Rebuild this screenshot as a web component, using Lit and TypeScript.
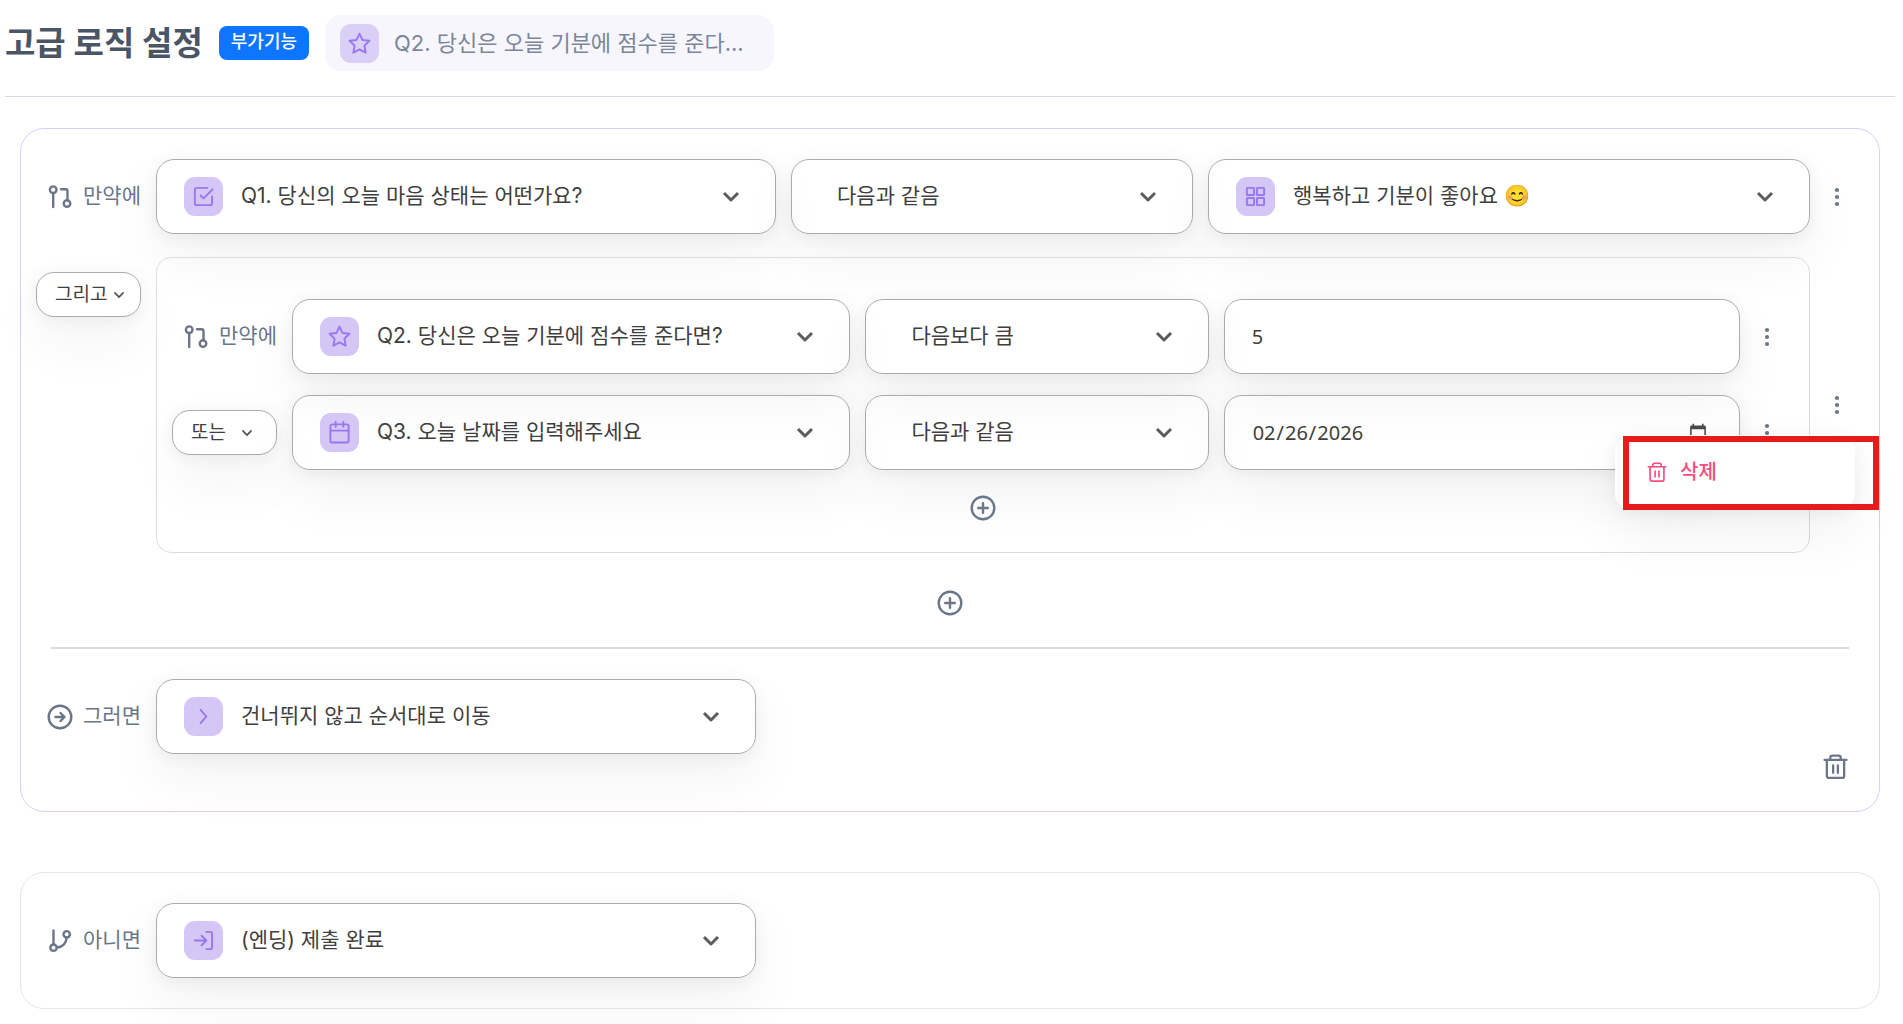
import { LitElement, html, css, svg, nothing } from "lit";
import { customElement, property } from "lit/decorators.js";

const ICONS: Record<string, unknown> = {
  star: svg`<polygon points="12 1.8 15.100 8.300 22.400 9.200 17.100 14.200 18.400 21.600 12 18.100 5.600 21.600 6.900 14.200 1.600 9.200 8.900 8.300"/>`,
  check: svg`<path d="M9 11l3 3 9.500-9.500M21 12v7a2 2 0 0 1-2 2H5a2 2 0 0 1-2-2V5a2 2 0 0 1 2-2h11"/>`,
  grid: svg`<rect x="3" y="3" width="7.500" height="7.500" rx=".6"/><rect x="13.500" y="3" width="7.500" height="7.500" rx=".6"/><rect x="3" y="13.500" width="7.500" height="7.500" rx=".6"/><rect x="13.500" y="13.500" width="7.500" height="7.500" rx=".6"/>`,
  calendar: svg`<rect x="2.500" y="3.500" width="19" height="19" rx="2"/><path d="M8 1v5M16 1v5M3 10h18"/>`,
  next: svg`<path d="M9 5l6 7-6 7"/>`,
  login: svg`<path d="M15 3h4a2 2 0 0 1 2 2v14a2 2 0 0 1-2 2h-4M10 17l5-5-5-5M15 12H3"/>`,
  request: svg`<circle cx="5.200" cy="4.700" r="3.300"/><path d="M5.200 8.200V22M13 4.200h4.500a2 2 0 0 1 2 2v9"/><circle cx="19" cy="18.600" r="3.300"/>`,
  branch: svg`<path d="M5.500 1.500V15M18.500 9a10 9.500 0 0 1-9.500 9.500"/><circle cx="18.700" cy="5.300" r="3.200"/><circle cx="5.500" cy="18.700" r="3.200"/>`,
  then: svg`<circle cx="12" cy="12" r="11.300"/><path d="M7.500 12h8.500M12.500 8l4 4-4 4"/>`,
  plus: svg`<circle cx="12" cy="12" r="11.300"/><path d="M12 7.200v9.600M7.200 12h9.600"/>`,
  trash: svg`<path d="M1.500 5.700h21M7 5.500V3.500a2 2 0 0 1 2-2h6a2 2 0 0 1 2 2v2M3.700 6v15a2 2 0 0 0 2 2h12.600a2 2 0 0 0 2-2V6M9.700 11v7M14.300 11v7"/>`,
  down: svg`<path d="M5 8.500l7 7 7-7"/>`,
  dots: svg`<g fill="currentColor" stroke="none"><circle cx="12" cy="5" r="2.100"/><circle cx="12" cy="12" r="2.100"/><circle cx="12" cy="19" r="2.100"/></g>`,
};

const icon = (name: string, cls = "icon") =>
  html`<svg class=${cls} viewBox="0 0 24 24" aria-hidden="true">${ICONS[name]}</svg>`;

const shared = css`
  * { box-sizing: border-box; }
  :host { --lift: 0 3px 16px rgba(0, 0, 0, 0.06), 0 24px 56px rgba(0, 0, 0, 0.055); }
  svg {
    display: block;
    flex: none;
    fill: none;
    stroke: currentColor;
    stroke-width: 2;
    stroke-linecap: round;
    stroke-linejoin: round;
    overflow: visible;
  }
  .icon { width: 24px; height: 24px; }
  button, select, input {
    margin: 0;
    padding: 0;
    border: 0;
    background: none;
    font: inherit;
    color: inherit;
    outline: none;
  }
  button { cursor: pointer; }
  select { appearance: none; cursor: pointer; }
  .tile {
    display: grid;
    place-items: center;
    flex: none;
    width: 39px;
    height: 39px;
    border-radius: 11px;
    background: #d4c7f6;
    color: #9977ef;
  }
  .tile svg { width: 23px; height: 23px; }
`;

@customElement("choice-box")
class ChoiceBox extends LitElement {
  @property() icon = "";
  @property() text = "";
  @property() name = "";

  static styles = [shared, css`
    :host { display: block; min-width: 0; }
    .box {
      display: flex;
      align-items: center;
      gap: 18px;
      height: 75px;
      padding: 0 32px 0 27px;
      border: 1px solid #ababab;
      border-radius: 18px;
      box-shadow: var(--lift);
    }
    .field { flex: 1; min-width: 0; height: 44px; padding-bottom: 2px; color: #3f3f3f; }
    .down { width: 24px; height: 24px; color: #5c5c5c; stroke-width: 3; stroke-linecap: butt; }
  `];

  render() {
    return html`
      <div class="box">
        ${this.icon ? html`<span class="tile">${icon(this.icon)}</span>` : html`<span></span>`}
        <select class="field" aria-label=${this.name}><option>${this.text}</option></select>
        <svg class="down" viewBox="0 0 24 24" aria-hidden="true"><path d="M5 8l7 7 7-7"/></svg>
      </div>`;
  }
}

@customElement("value-box")
class ValueBox extends LitElement {
  @property() type = "text";
  @property() value = "";

  static styles = [shared, css`
    :host { display: block; min-width: 0; }
    .value {
      display: block;
      width: 100%;
      height: 75px;
      padding: 0 29px 0 27px;
      border: 1px solid #ababab;
      border-radius: 18px;
      box-shadow: var(--lift);
      color: #3f3f3f;
      font-family: "Noto Sans", "Noto Sans CJK KR", sans-serif;
      font-size: 20px;
    }
    .value::-webkit-datetime-edit-fields-wrapper { padding: 0; }
    .value::-webkit-calendar-picker-indicator { opacity: 0.7; }
  `];

  render() {
    return html`<input class="value" type=${this.type} .value=${this.value} aria-label="값" />`;
  }
}

@customElement("join-box")
class JoinBox extends LitElement {
  @property() text = "";

  static styles = [shared, css`
    :host { display: block; }
    .join {
      display: flex;
      align-items: center;
      width: 105px;
      height: 45px;
      padding-left: 18px;
      border: 1px solid #ababab;
      border-radius: 18px;
      background: #fff;
      box-shadow: var(--lift);
      font-size: 19px;
      color: #3f3f3f;
    }
    .pick { height: 32px; width: 57px; }
    .short { width: 49px; }
    .down { width: 14px; height: 14px; stroke-width: 3; color: #555; }
  `];

  render() {
    return html`
      <div class="join">
        <select class="pick ${this.text.length < 3 ? "short" : ""}" aria-label="조건 연결">
          <option>${this.text}</option>
        </select>
        ${icon("down", "down")}
      </div>`;
  }
}

@customElement("app-root")
class AppRoot extends LitElement {
  static styles = [shared, css`
    :host {
      display: block;
      overflow: hidden;
      min-height: 100vh;
      background: #fff;
      color: #6b7688;
      font-family: Inter, "Noto Sans CJK KR", sans-serif;
      font-size: 21px;
      line-height: 30px;
    }
    .head {
      display: flex;
      align-items: center;
      gap: 16px;
      margin: 0 8px 0 5px;
      padding: 15px 0 25px;
      border-bottom: 1px solid #d5d9e2;
    }
    .title { margin: 0; color: #4a5565; font-size: 33px; line-height: 40px; font-weight: 700; }
    .badge {
      padding: 1px 12px 3px;
      border-radius: 8px;
      background: #0d75ff;
      color: #fff;
      font-size: 18px;
      font-weight: 500;
    }
    .chip {
      display: flex;
      align-items: center;
      gap: 15px;
      height: 56px;
      padding: 0 30px 0 15px;
      border-radius: 16px;
      background: #f7f6fc;
      color: #7b869a;
      font-size: 22px;
    }
    .chip .tile { background: #dacff7; }
    .body { display: grid; gap: 60px; padding: 31px 23px 15px 20px; }
    .panel { padding: 30px 30px 30px 15px; border: 1px solid #d6d0fb; border-radius: 24px; }
    .plain { border-color: #e6e6e6; }
    .row { display: grid; grid-template-columns: 105px 1fr 24px; column-gap: 15px; align-items: center; }
    .label { display: flex; align-items: center; justify-content: flex-end; gap: 11px; white-space: nowrap; }
    .label svg, .add svg, .outer svg { stroke-width: 2.4; }
    .words { padding-bottom: 2px; }
    .fields { display: grid; grid-template-columns: 620fr 402fr 602fr; gap: 15px; }
    .inner .fields { grid-template-columns: 558fr 343fr 516fr; }
    .single { width: 600px; }
    .more { position: relative; height: 24px; }
    .nested { margin-top: 23px; }
    .join { align-self: start; padding-top: 15px; }
    .inner {
      display: grid;
      row-gap: 21px;
      padding: 41px 30px 32px 15px;
      border: 1px solid #dcdcdc;
      border-radius: 15px;
    }
    .add { justify-self: center; display: block; width: 24px; margin: 5px 0 0 15px; }
    .outer { margin: 38px auto 32px; }
    .center { display: flex; padding-left: 15px; }
    .rule { height: 2px; margin: 0 0 30px 15px; border: 0; background: #d9dce1; }
    .foot { display: flex; justify-content: flex-end; }
    .foot svg { width: 27px; height: 27px; padding: 0 1px 2px; stroke-width: 2.2; }
    .menu {
      position: absolute;
      z-index: 2;
      top: 14px;
      right: -76px;
      width: 240px;
      height: 75px;
      border-radius: 16px;
      background: #fff;
      box-shadow: var(--lift);
    }
    .remove {
      display: flex;
      align-items: center;
      gap: 13px;
      width: 100%;
      height: 75px;
      padding-left: 32px;
      color: #fa4d7c;
      font-size: 20px;
      font-weight: 500;
    }
    .remove svg { width: 20px; height: 20px; }
    .mark { position: absolute; inset: 1px -24px 0 8px; border: 6px solid #e81b1b; pointer-events: none; }
  `];

  private label(name: string, text: string) {
    return html`<span class="label">${icon(name)}<span class="words">${text}</span></span>`;
  }

  private more(menu: unknown = nothing) {
    return html`<div class="more"><button aria-label="더보기">${icon("dots")}</button>${menu}</div>`;
  }

  render() {
    return html`
      <header class="head">
        <h1 class="title">고급 로직 설정</h1>
        <span class="badge">부가기능</span>
        <span class="chip"><span class="tile">${icon("star")}</span>Q2. 당신은 오늘 기분에 점수를 준다...</span>
      </header>
      <main class="body">
        <section class="panel">
          <div class="row">
            ${this.label("request", "만약에")}
            <div class="fields">
              <choice-box icon="check" name="질문" text="Q1. 당신의 오늘 마음 상태는 어떤가요?"></choice-box>
              <choice-box name="비교" text="다음과 같음"></choice-box>
              <choice-box icon="grid" name="답변" text="행복하고 기분이 좋아요 😊"></choice-box>
            </div>
            ${this.more()}
          </div>
          <div class="row nested">
            <join-box class="join" text="그리고"></join-box>
            <div class="inner">
              <div class="row">
                ${this.label("request", "만약에")}
                <div class="fields">
                  <choice-box icon="star" name="질문" text="Q2. 당신은 오늘 기분에 점수를 준다면?"></choice-box>
                  <choice-box name="비교" text="다음보다 큼"></choice-box>
                  <value-box value="5"></value-box>
                </div>
                ${this.more()}
              </div>
              <div class="row">
                <join-box text="또는"></join-box>
                <div class="fields">
                  <choice-box icon="calendar" name="질문" text="Q3. 오늘 날짜를 입력해주세요"></choice-box>
                  <choice-box name="비교" text="다음과 같음"></choice-box>
                  <value-box type="date" value="2026-02-26"></value-box>
                </div>
                ${this.more(html`
                  <div class="menu">
                    <button class="remove">${icon("trash")}삭제</button>
                    <div class="mark"></div>
                  </div>`)}
              </div>
              <button class="add" aria-label="하위 조건 추가">${icon("plus")}</button>
            </div>
            ${this.more()}
          </div>
          <div class="center"><button class="outer" aria-label="조건 추가">${icon("plus")}</button></div>
          <hr class="rule" />
          <div class="row">
            ${this.label("then", "그러면")}
            <choice-box class="single" icon="next" name="이동" text="건너뛰지 않고 순서대로 이동"></choice-box>
          </div>
          <div class="foot"><button aria-label="로직 삭제">${icon("trash")}</button></div>
        </section>
        <section class="panel plain">
          <div class="row">
            ${this.label("branch", "아니면")}
            <choice-box class="single" icon="login" name="이동" text="(엔딩) 제출 완료"></choice-box>
          </div>
        </section>
      </main>`;
  }
}
